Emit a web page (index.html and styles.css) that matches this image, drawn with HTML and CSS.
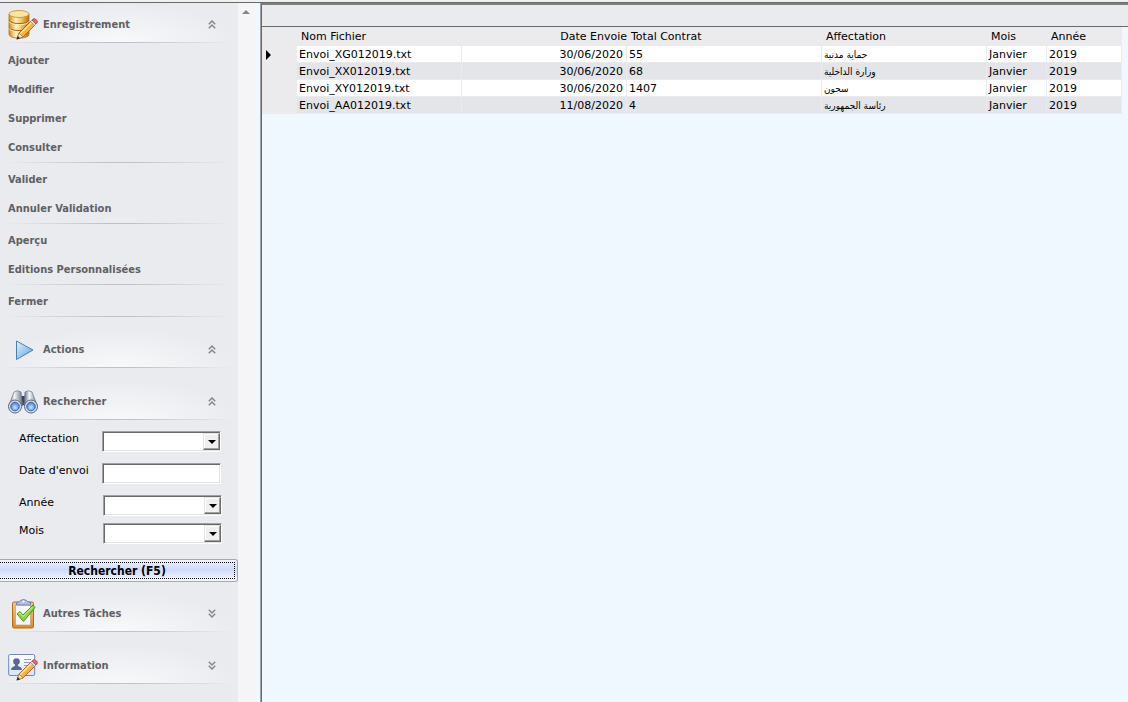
FILE: index.html
```html
<!DOCTYPE html>
<html lang="fr">
<head>
<meta charset="utf-8">
<title>Envois</title>
<link rel="stylesheet" href="styles.css">
</head>
<body>
<svg class="defs" aria-hidden="true">
  <defs>
    <linearGradient id="gold"><stop offset="0" stop-color="#d58a1c"/><stop offset=".35" stop-color="#fff3c4"/><stop offset=".6" stop-color="#f7c860"/><stop offset="1" stop-color="#b96d12"/></linearGradient>
    <linearGradient id="blue" x2="1" y2="1"><stop offset="0" stop-color="#e2f3fd"/><stop offset="1" stop-color="#5ca3dc"/></linearGradient>
    <linearGradient id="metal"><stop offset="0" stop-color="#5a6478"/><stop offset=".4" stop-color="#f4f6fa"/><stop offset="1" stop-color="#69738a"/></linearGradient>
    <radialGradient id="lens" cx=".5" cy=".6"><stop offset="0" stop-color="#cfe8ff"/><stop offset="1" stop-color="#4f8ae4"/></radialGradient>
    <linearGradient id="board" x2="0" y2="1"><stop offset="0" stop-color="#f6cb7c"/><stop offset="1" stop-color="#dd8a22"/></linearGradient>
    <linearGradient id="card" x2="0" y2="1"><stop offset="0" stop-color="#ffffff"/><stop offset="1" stop-color="#d9e4f8"/></linearGradient>
    <symbol id="pencil" viewBox="0 0 22 22">
      <path d="M1 21 3 15 15 3 19 7 7 19Z" fill="#f6b140" stroke="#a4500e" stroke-width=".8"/>
      <path d="M4.500 15.500 15.500 4.500" stroke="#ffe7a0" stroke-width="1.500"/>
      <path d="M1 21 3 15 7 19Z" fill="#f8dfb8" stroke="#8a5a2c" stroke-width=".5"/>
      <path d="M.5 21.500 1.800 17.900 4.100 20.200Z" fill="#26283c"/>
      <path d="m14.500 3.500 1.500-1.500 4 4-1.500 1.500Z" fill="#d2dcf0" stroke="#71809f" stroke-width=".6"/>
      <path d="m16 2 1-1q1-1 2.500 0L21 2.500Q22 4 21 5L20 6Z" fill="#e26a62" stroke="#9f3738" stroke-width=".6"/>
    </symbol>
    <symbol id="up" viewBox="0 0 8 9"><path d="M.8 4.200 4 1 7.200 4.200M.8 8.200 4 5 7.200 8.200" fill="none" stroke="#858790" stroke-width="1.500"/></symbol>
    <symbol id="down" viewBox="0 0 8 9"><path d="M.8.800 4 4 7.200.800M.8 4.800 4 8 7.200 4.800" fill="none" stroke="#858790" stroke-width="1.500"/></symbol>
  </defs>
</svg>
<div class="app">
  <aside class="sidebar">
    <button class="group-head" type="button">
      <svg class="group-icon" viewBox="0 0 32 32"><path d="M1 5v20q0 4 10 4t10-4V5Z" fill="url(#gold)" stroke="#b3731c" stroke-width=".8"/><ellipse cx="11" cy="5" rx="10" ry="3.500" fill="#fbe3a2" stroke="#c98b2b" stroke-width=".8"/><path d="M1 11q1 3.500 10 3.500T21 11M1 18q1 3.500 10 3.500T21 18" fill="none" stroke="#a9640f"/><path d="M1 12.200q1 3.500 10 3.500t10-3.500M1 19.200q1 3.500 10 3.500t10-3.500" fill="none" stroke="#fff3cb" stroke-width=".8"/><use href="#pencil" x="8" y="9" width="22" height="22"/></svg>
      <span class="group-title">Enregistrement</span>
      <svg class="chevron"><use href="#up"/></svg>
    </button>
    <nav class="menu">
      <div class="menu-part"><button class="menu-item" type="button">Ajouter</button><button class="menu-item" type="button">Modifier</button><button class="menu-item" type="button">Supprimer</button><button class="menu-item" type="button">Consulter</button></div>
      <div class="menu-part"><button class="menu-item" type="button">Valider</button><button class="menu-item" type="button">Annuler Validation</button></div>
      <div class="menu-part"><button class="menu-item" type="button">Aperçu</button><button class="menu-item" type="button">Editions Personnalisées</button></div>
      <div class="menu-part"><button class="menu-item" type="button">Fermer</button></div>
    </nav>
    <button class="group-head" type="button">
      <svg class="group-icon" viewBox="0 0 32 32"><path d="M8.500 7v18.500L25 16Z" fill="url(#blue)" stroke="#4383b8" stroke-linejoin="round"/></svg>
      <span class="group-title">Actions</span>
      <svg class="chevron"><use href="#up"/></svg>
    </button>
    <button class="group-head" type="button">
      <svg class="group-icon" viewBox="0 0 32 32"><path d="M12 10h7v9h-7Z" fill="#39435a"/><path d="M6 6q3-2.500 7 0l1.500 14H.800Z" fill="url(#metal)" stroke="#69738a" stroke-width=".7"/><path d="M17 6q4-2.500 7 0l5.500 14H16Z" fill="url(#metal)" stroke="#69738a" stroke-width=".7"/><circle cx="7" cy="20.500" r="6.500" fill="#dce2ee" stroke="#59647d"/><circle cx="23" cy="20.500" r="6.500" fill="#dce2ee" stroke="#59647d"/><circle cx="7" cy="20.500" r="4.300" fill="url(#lens)" stroke="#3264ac"/><circle cx="23" cy="20.500" r="4.300" fill="url(#lens)" stroke="#3264ac"/></svg>
      <span class="group-title">Rechercher</span>
      <svg class="chevron"><use href="#up"/></svg>
    </button>
    <form class="search" onsubmit="return false">
      <div class="fields">
        <label for="aff">Affectation</label>
        <span class="combo"><select id="aff"><option></option></select><span class="combo-arrow"></span></span>
        <label for="date">Date d'envoi</label>
        <input class="text-box" id="date" type="text">
        <label for="annee">Année</label>
        <span class="combo combo-inset"><select id="annee"><option></option></select><span class="combo-arrow"></span></span>
        <label class="tight" for="mois">Mois</label>
        <span class="combo combo-inset tight"><select id="mois"><option></option></select><span class="combo-arrow"></span></span>
      </div>
      <button class="search-button" type="submit"><span>Rechercher (F5)</span></button>
    </form>
    <button class="group-head" type="button">
      <svg class="group-icon" viewBox="0 0 32 32"><rect x="4.500" y="4" width="21" height="26" rx="1.500" fill="url(#board)" stroke="#b66a15"/><path d="M7.500 7h15v20h-15Z" fill="#f6f8ff" stroke="#b9a078" stroke-width=".7"/><path d="M8.500 7V4.500Q12 4 12.500 2.500q3-2 6 0Q19 4 22.500 4.500V7Z" fill="#b5c2de" stroke="#667aa6" stroke-width=".9"/><circle cx="15.500" cy="3.500" r="1" fill="#fff"/><path d="m9 16 3-2.500 3 3.500L25 7l2 2.500L15.500 23.500Z" fill="#8ed43c" stroke="#4c9416"/><path d="m10.500 16 1.500-1 3 3.500L24.500 9" fill="none" stroke="#d8f5a5"/></svg>
      <span class="group-title">Autres Tâches</span>
      <svg class="chevron"><use href="#down"/></svg>
    </button>
    <button class="group-head" type="button">
      <svg class="group-icon" viewBox="0 0 32 32"><rect x=".7" y="4.500" width="26" height="21" rx="1.500" fill="url(#card)" stroke="#7088bd"/><circle cx="8.500" cy="11.500" r="3.300" fill="#586a91"/><path d="M7 14h3v2q4 1 4 4H3q0-3 4-4Z" fill="#586a91"/><path d="M16 9.500h7M16 12.500h7M16 15.500h7M16 18.500h5" stroke="#8ca0ce"/><use href="#pencil" x="8" y="9" width="22" height="22"/></svg>
      <span class="group-title">Information</span>
      <svg class="chevron"><use href="#down"/></svg>
    </button>
  </aside>
  <div class="scroll-track"><span class="scroll-up"></span></div>
  <main class="panel">
    <div class="panel-bar"></div>
    <table class="grid">
      <colgroup><col class="c-mark"><col class="c-file"><col class="c-date"><col class="c-total"><col class="c-aff"><col class="c-month"><col class="c-year"></colgroup>
      <thead><tr><th></th><th>Nom Fichier</th><th class="date">Date Envoie</th><th>Total Contrat</th><th>Affectation</th><th>Mois</th><th>Année</th></tr></thead>
      <tbody>
        <tr><td class="mark"><span class="pointer"></span></td><td>Envoi_XG012019.txt</td><td class="date">30/06/2020</td><td>55</td><td class="arabic"><bdi lang="ar">حماية مدنية</bdi></td><td>Janvier</td><td>2019</td></tr>
        <tr><td class="mark"></td><td>Envoi_XX012019.txt</td><td class="date">30/06/2020</td><td>68</td><td class="arabic"><bdi lang="ar">وزارة الداخلية</bdi></td><td>Janvier</td><td>2019</td></tr>
        <tr><td class="mark"></td><td>Envoi_XY012019.txt</td><td class="date">30/06/2020</td><td>1407</td><td class="arabic"><bdi lang="ar">سجون</bdi></td><td>Janvier</td><td>2019</td></tr>
        <tr><td class="mark"></td><td>Envoi_AA012019.txt</td><td class="date">11/08/2020</td><td>4</td><td class="arabic"><bdi lang="ar">رئاسة الجمهورية</bdi></td><td>Janvier</td><td>2019</td></tr>
      </tbody>
    </table>
  </main>
</div>
</body>
</html>
```
FILE: styles.css
```css
* { box-sizing: border-box; }
body {
  margin: 0;
  background: #f0f8ff;
  color: #000;
  font: 11px/16px Verdana, "DejaVu Sans", sans-serif;
}
button, input, select { font: inherit; color: inherit; margin: 0; }
.defs { position: absolute; width: 0; height: 0; }
.app {
  display: grid;
  grid-template-columns: 238px 17px minmax(0, 1fr);
  min-height: 100vh;
  border-top: 2px solid #eef1ef;
  box-shadow: inset 0 1px #696969;
  padding-top: 1px;
}
.sidebar { background: #e9ebef; }
.group-head {
  display: grid;
  grid-template-columns: 32px 1fr 8px;
  align-items: center;
  column-gap: 3px;
  width: 100%;
  height: 40px;
  padding: 3px 22px 0 8px;
  border: 0;
  background:
    linear-gradient(90deg, #e9ebef, #bfc1c8 45%, #bfc1c8 55%, #e9ebef 97%) 0 100% / 100% 1px no-repeat,
    radial-gradient(ellipse 120px 40px at 50% 100%, #f8f9fa, #e9ebef);
  text-align: left;
}
.group-head + .group-head { margin-top: 12px; }
.group-icon { width: 32px; height: 32px; }
.group-title, .menu-item {
  color: #5f6064;
  font: bold 11px/16px Tahoma, "DejaVu Sans Condensed", "DejaVu Sans", sans-serif;
}
.chevron { width: 8px; height: 9px; }
.menu { padding: 3px 0 9px; }
.menu-part {
  display: flex;
  flex-direction: column;
  padding-bottom: 3px;
  background: linear-gradient(90deg, #e9ebef 2%, #bfc1c8 45%, #bfc1c8 55%, #e9ebef 97%) 0 calc(100% - 2px) / 100% 1px no-repeat;
}
.menu-item {
  height: 29px;
  padding: 0 8px;
  border: 0;
  background: none;
  text-align: left;
}
.search { padding: 11px 0 10px; }
.fields {
  display: grid;
  grid-template-columns: 83px 1fr;
  row-gap: 11px;
  padding: 0 17px 0 19px;
}
.fields label { height: 16px; }
.fields .tight { margin-top: -4px; }
.combo { position: relative; display: block; height: 21px; }
.combo-inset { margin-left: 1px; margin-right: -1px; }
.combo select, .text-box {
  display: block;
  width: 100%;
  height: 21px;
  padding: 0 2px;
  border: 1px solid;
  border-color: #a0a0a0 #fff #fff #a0a0a0;
  border-radius: 0;
  background: #fff;
  box-shadow: inset 1px 1px #696969, inset -1px -1px #e3e3e3;
  appearance: none;
  outline: 0;
}
.combo-arrow {
  position: absolute;
  top: 2px;
  right: 1px;
  width: 17px;
  height: 17px;
  border: 1px solid;
  border-color: #e3e3e3 #696969 #696969 #e3e3e3;
  background: #f0f0f0;
  box-shadow: inset -1px -1px #a0a0a0, inset 1px 1px #fff;
  pointer-events: none;
}
.combo-arrow::after {
  content: "";
  position: absolute;
  top: 6px;
  left: 4px;
  border: solid transparent;
  border-width: 4px 4px 0;
  border-top-color: #000;
}
.search-button {
  display: block;
  width: 100%;
  height: 23px;
  margin-top: 15px;
  padding: 2px 2px 2px 0;
  border: 1px solid #a5a7b5;
  border-left: 0;
  border-radius: 0 3px 3px 0;
  background: linear-gradient(#f0f3ff, #cddafb 45%, #d5e0fc 55%, #f5f8ff);
  font: bold 12px/15px Tahoma, "DejaVu Sans Condensed", "DejaVu Sans", sans-serif;
}
.search-button span { display: block; padding-top: 1px; height: 17px; border: 1px dotted #000; border-left: 0; }
.scroll-track { background: #f5f5f7; padding: 7px 4px; }
.scroll-up { display: block; width: 8px; border: solid transparent; border-width: 0 4px 4px; border-bottom-color: #858790; }
.panel {
  min-width: 0;
  margin-left: 5px;
  border: 0 solid #696969;
  border-width: 2px 0 0 1px;
  box-shadow: -1px 0 #a0a0a0;
  margin-left: 6px;
  border-top-color: #7c7e7e;
}
.panel-bar { height: 22px; background: #e9ebef; border-bottom: 1px solid #696969; }
.grid { width: 860px; table-layout: fixed; border-collapse: separate; border-spacing: 0; }
.c-mark { width: 35px; }
.c-file, .c-date, .c-aff { width: 165px; }
.c-total { width: 195px; }
.c-month { width: 60px; }
.c-year { width: 75px; }
.grid th {
  height: 19px;
  padding: 0 0 0 4px;
  background: #ebebed;
  font-weight: normal;
  text-align: left;
  white-space: nowrap;
}
.grid td {
  height: 17px;
  padding: 1px 0 0 2px;
  border-right: 1px solid #ebebed;
  background: #fff;
  box-shadow: inset 0 -1px #ebebed;
  line-height: 16px;
  white-space: nowrap;
}
.grid tr:nth-child(even) td { background: #e3e5e9; }
.grid tbody tr .mark.mark { background: #ebebed; padding: 0 0 0 4px; }
.grid .date { text-align: right; padding-right: 3px; }
.grid th.date { padding-right: 0; }
.pointer { display: block; width: 5px; border: solid transparent; border-width: 5px 0 5px 5px; border-left-color: #000; }
.arabic { font-family: "DejaVu Sans Condensed", "DejaVu Sans", sans-serif; }
.arabic bdi { font-size: 10px; }
```
